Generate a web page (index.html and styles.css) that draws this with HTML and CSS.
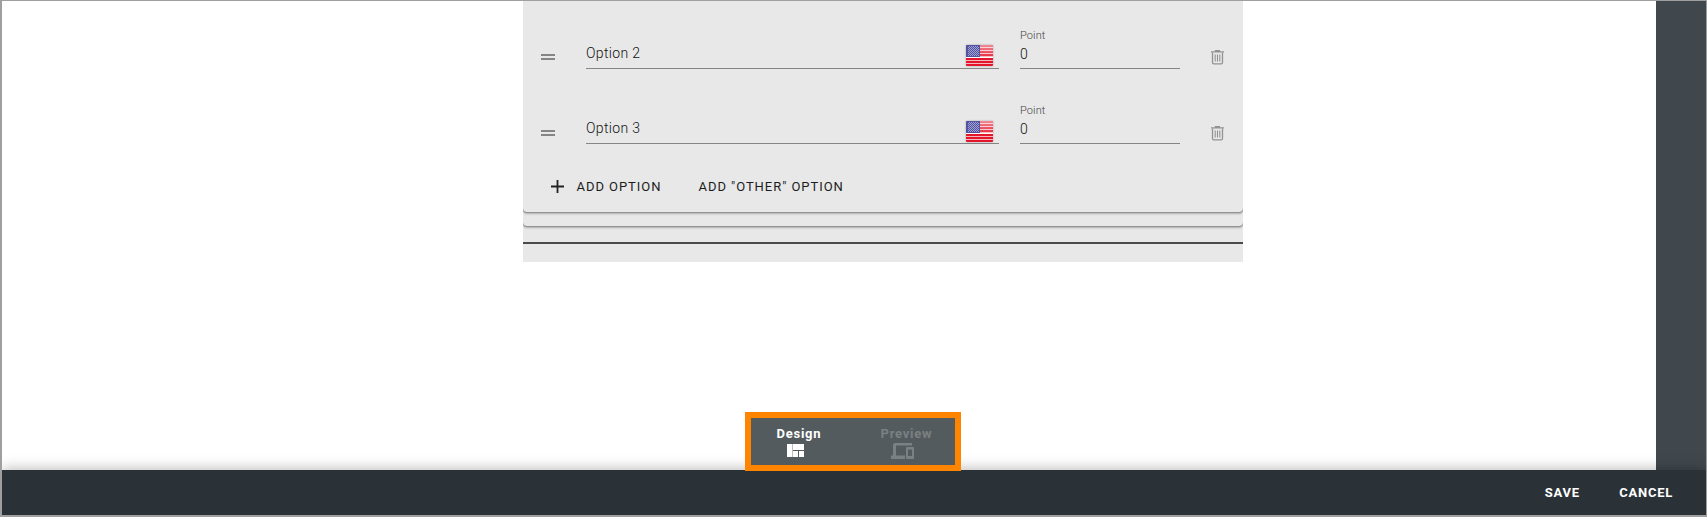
FILE: index.html
```html
<!DOCTYPE html>
<html lang="en">
<head>
<meta charset="utf-8">
<title>Survey designer</title>
<link rel="stylesheet" href="styles.css">
</head>
<body>
<svg class="defs" width="0" height="0" aria-hidden="true">
  <defs>
    <pattern id="stars" width="2" height="2" patternUnits="userSpaceOnUse">
      <rect width="1" height="1" fill="#c0c2e0"/><rect x="1" y="1" width="1" height="1" fill="#c0c2e0"/>
    </pattern>
    <linearGradient id="gloss" x1="0" y1="0" x2="0" y2="1">
      <stop offset="0" stop-color="#fff" stop-opacity=".5"/><stop offset="1" stop-color="#fff" stop-opacity=".1"/>
    </linearGradient>
    <symbol id="flag" viewBox="0 0 27 21">
      <rect width="27" height="21" fill="#f5b5bd"/>
      <path fill="#e3152a" d="M0 0h27v2H0zM0 3h27v2H0zM0 6h27v2H0zM0 9h27v2H0zM0 13h27v2H0zM0 16h27v2H0zM0 19h27v2H0z"/>
      <path fill="#fff" d="M0 12h27v1H0z"/>
      <rect width="27" height="12" fill="url(#gloss)"/>
      <rect width="14" height="12" fill="#3c3c98"/>
      <rect x="2" y="1" width="11" height="10" fill="url(#stars)" opacity=".65"/>
      <rect width="14" height="12" fill="#fff" opacity=".12"/>
    </symbol>
    <symbol id="trash" viewBox="0 0 13 15">
      <g fill="none" stroke="#929292">
        <path d="M0 1.800h13M4.500 1.500V.6h4v.9" stroke-width="1.2"/>
        <path d="M1.500 2.500v10q0 1.300 1.300 1.300h7.400q1.300 0 1.300-1.300v-10" stroke-width="1.3"/>
        <path d="M4.200 4.500v7M6.500 4.500v7M8.800 4.500v7" stroke-width="1.100"/>
      </g>
    </symbol>
  </defs>
</svg>
<div class="app">
  <main class="workspace">
    <section class="canvas">
      <div class="form-panel">
        <div class="group-card">
          <div class="question-card">
            <div class="option-row">
              <span class="drag-handle"></span>
              <label class="field field-name"><span class="field-value">Option 2</span><svg class="flag"><use href="#flag"/></svg></label>
              <label class="field field-point"><span class="field-label">Point</span><span class="field-value">0</span></label>
              <svg class="trash"><use href="#trash"/></svg>
            </div>
            <div class="option-row option-row-last">
              <span class="drag-handle"></span>
              <label class="field field-name"><span class="field-value">Option 3</span><svg class="flag"><use href="#flag"/></svg></label>
              <label class="field field-point"><span class="field-label">Point</span><span class="field-value">0</span></label>
              <svg class="trash"><use href="#trash"/></svg>
            </div>
            <div class="option-actions">
              <svg class="plus" viewBox="0 0 13 13"><path d="M6.5 0v13M0 6.5h13" stroke="#222" stroke-width="1.8"/></svg>
              <span class="add-option">ADD OPTION</span>
              <span class="add-other">ADD "OTHER" OPTION</span>
            </div>
          </div>
        </div>
        <div class="divider"></div>
      </div>
    </section>
    <aside class="side-rail"></aside>
  </main>
  <footer class="action-bar">
    <span class="save">SAVE</span>
    <span class="cancel">CANCEL</span>
  </footer>
  <nav class="mode-switch">
    <div class="mode mode-design">
      <span>Design</span>
      <svg class="icon-design" viewBox="0 0 17 13"><path fill="#fff" d="M0 0h5v13H0zM6 0h11v6H6zM6 7h5v6H6zM12 7h5v6h-5z"/><path fill="#bbbfc0" d="M5 0h1v13H5z"/></svg>
    </div>
    <div class="mode mode-preview">
      <span>Preview</span>
      <svg class="icon-preview" viewBox="0 0 23 16"><path fill="#7b8082" fill-rule="evenodd" d="M4 0h17v2.500H5V12.500h9V16H0v-3.500h2V2q0-2 2-2zM16 4h6q1 0 1 1v10q0 1-1 1h-6q-1 0-1-1V5q0-1 1-1zM17 6.500v6.500h4V6.500z"/></svg>
    </div>
  </nav>
</div>
</body>
</html>
```
FILE: styles.css
```css
* { box-sizing: border-box; }
body { margin: 0; font-family: Roboto, "Liberation Sans", sans-serif; }
.defs { position: absolute; }
.app {
  position: relative;
  display: flex;
  flex-direction: column;
  width: 1707px;
  height: 517px;
  border: solid #9f9f9f;
  border-width: 1px 1px 2px 2px;
  overflow: hidden;
  background: #fff;
}
.workspace { display: flex; height: 469px; }
.canvas { flex: 1; padding-left: 521px; }
.side-rail { width: 50px; background: #40484e; }

.form-panel { width: 720px; height: 261px; background: #e8e8e8; overflow: hidden; }
.group-card {
  padding-bottom: 14px;
  border-radius: 0 0 4px 4px;
  box-shadow: 0 1px 0 #929493, 0 2px 2px rgba(0, 0, 0, .25);
}
.question-card {
  height: 211px;
  border-radius: 0 0 4px 4px;
  box-shadow: 0 1px 0 #929493, 0 2px 2px rgba(0, 0, 0, .25);
}
.divider { height: 2px; margin-top: 16px; background: #4a4a4a; }

.option-row { display: flex; height: 75px; padding: 22px 0 0 18px; }
.option-row-last { height: 76px; }
.drag-handle {
  width: 14px;
  height: 6px;
  margin: 31px 31px 0 0;
  border: solid #858585;
  border-width: 2px 0;
}
.option-row-last .drag-handle { margin-top: 32px; }
.field {
  display: flex;
  flex-direction: column;
  height: 46px;
  border-bottom: 1px solid #858585;
  color: #111;
  position: relative;
}
.field-name { width: 413px; padding-top: 22px; margin-right: 21px; }
.field-point { width: 160px; padding-top: 5px; }
.field-value { font-size: 14px; font-weight: 300; line-height: 16px; letter-spacing: .35px; }
.field-label { font-size: 11px; font-weight: 300; line-height: 15px; letter-spacing: .1px; color: #444; }
.field-point .field-value { margin-top: 3px; }
.flag {
  position: absolute;
  right: 6px;
  top: 22px;
  width: 27px;
  height: 21px;
  border-radius: 1px;
  box-shadow: 0 0 2px rgba(0, 0, 0, .35);
}
.option-row-last .flag { top: 23px; }
.trash { width: 13px; height: 15px; margin: 27px 0 0 31px; }
.option-row-last .trash { margin-top: 28px; }

.option-actions {
  display: flex;
  align-items: center;
  height: 16px;
  margin-top: 27px;
  padding-left: 28px;
  font-size: 13px;
  font-weight: 400;
  line-height: 16px;
  letter-spacing: .95px;
  color: #1c1c1c;
  white-space: nowrap;
}
.plus { width: 13px; height: 13px; margin: -2px 12.5px 0 0; }
.add-option { width: 122px; }

.action-bar {
  position: relative;
  display: flex;
  align-items: center;
  justify-content: flex-end;
  height: 45px;
  padding: 0 33px 0 0;
  background: #2a3238;
  box-shadow: 0 -2px 12px rgba(0, 0, 0, .25);
  color: #fff;
  font-size: 13px;
  font-weight: 700;
  letter-spacing: .75px;
}
.save { margin-right: 39.5px; }

.mode-switch {
  position: absolute;
  left: 743px;
  top: 411px;
  display: flex;
  width: 216px;
  height: 59px;
  border: 6px solid #ff8400;
  background: #545b5e;
  font-size: 13px;
  font-weight: 700;
  line-height: 16px;
  letter-spacing: .75px;
  color: #fff;
}
.mode { display: flex; flex-direction: column; padding-top: 8px; }
.mode-design { width: 104px; padding-left: 25.5px; }
.mode-preview { padding-left: 25.5px; color: #7b8082; }
.icon-design { width: 17px; height: 13px; margin: 2px 0 0 10.5px; }
.icon-preview { width: 23px; height: 16px; margin: 1px 0 0 10.5px; }
```
